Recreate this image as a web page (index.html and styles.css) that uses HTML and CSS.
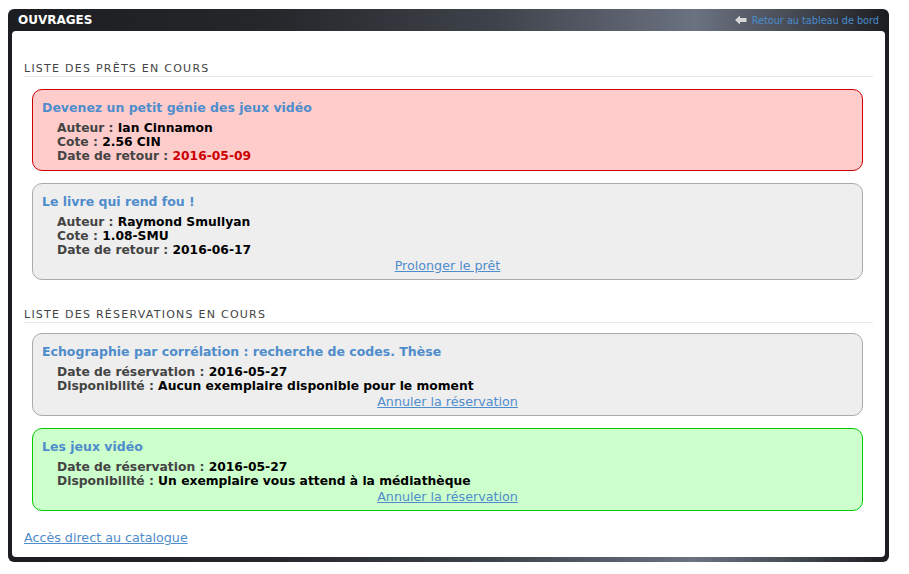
FILE: index.html
```html
<!DOCTYPE html>
<html lang="fr">
<head>
<meta charset="utf-8">
<title>Ouvrages</title>
<link rel="stylesheet" href="styles.css">
</head>
<body>
<div class="frame">
  <div class="frame-head">
    <h1 class="frame-title">OUVRAGES</h1>
    <a class="back" href="#"><svg class="back-icon" width="12" height="10" viewBox="0 0 12 10"><path d="M0 5 L5 0.5 L5 3 L11.5 3 L11.5 7 L5 7 L5 9.5 Z" fill="#d8d8d8"/></svg>Retour au tableau de bord</a>
  </div>
  <div class="frame-body">
    <h2 class="section-title">LISTE DES PRÊTS EN COURS</h2>
    <div class="card card-late">
      <div class="card-title">Devenez un petit génie des jeux vidéo</div>
      <div class="card-info">
        <div><span class="lbl">Auteur :</span> Ian Cinnamon</div>
        <div><span class="lbl">Cote :</span> 2.56 CIN</div>
        <div><span class="lbl">Date de retour :</span> <span class="late">2016-05-09</span></div>
      </div>
    </div>
    <div class="card">
      <div class="card-title">Le livre qui rend fou !</div>
      <div class="card-info">
        <div><span class="lbl">Auteur :</span> Raymond Smullyan</div>
        <div><span class="lbl">Cote :</span> 1.08-SMU</div>
        <div><span class="lbl">Date de retour :</span> 2016-06-17</div>
      </div>
      <div class="card-action"><a href="#">Prolonger le prêt</a></div>
    </div>

    <h2 class="section-title section-second">LISTE DES RÉSERVATIONS EN COURS</h2>
    <div class="card">
      <div class="card-title">Echographie par corrélation : recherche de codes. Thèse</div>
      <div class="card-info">
        <div><span class="lbl">Date de réservation :</span> 2016-05-27</div>
        <div><span class="lbl">Disponibilité :</span> Aucun exemplaire disponible pour le moment</div>
      </div>
      <div class="card-action"><a href="#">Annuler la réservation</a></div>
    </div>
    <div class="card card-ready">
      <div class="card-title">Les jeux vidéo</div>
      <div class="card-info">
        <div><span class="lbl">Date de réservation :</span> 2016-05-27</div>
        <div><span class="lbl">Disponibilité :</span> Un exemplaire vous attend à la médiathèque</div>
      </div>
      <div class="card-action"><a href="#">Annuler la réservation</a></div>
    </div>

    <a class="catalog" href="#">Accès direct au catalogue</a>
  </div>
</div>
</body>
</html>
```
FILE: styles.css
```css
html, body {
  margin: 0;
  padding: 0;
  background: #fff;
}
body {
  padding: 9px 20px 0 8px;
  font-family: "DejaVu Sans", Verdana, sans-serif;
}
.frame {
  width: 881px;
  height: 553px;
  box-sizing: border-box;
  border-radius: 6px;
  background: linear-gradient(to right, #1c1d20 0%, #25272b 30%, #3e424a 55%, #6b7280 78%, #4a4f58 88%, #1c1d20 100%);
  padding: 0 4px 5px 4px;
  display: flex;
  flex-direction: column;
}
.frame-head {
  flex: 0 0 22px;
  height: 22px;
  display: flex;
  align-items: center;
  justify-content: space-between;
  padding: 0 6px 0 6px;
}
.frame-title {
  margin: 0;
  color: #fff;
  font-size: 12px;
  font-weight: bold;
}
.back {
  color: #4a8ccc;
  font-size: 9.7px;
  text-decoration: none;
  display: flex;
  align-items: center;
  gap: 5px;
}
.back-icon {
  display: block;
}
.frame-body {
  flex: 1 1 auto;
  min-height: 0;
  background: #fff;
  border-radius: 4px;
  padding: 31px 12px 0 12px;
  display: flex;
  flex-direction: column;
}
.section-title {
  margin: 0 0 12px 0;
  font-size: 11px;
  line-height: 13px;
  font-weight: normal;
  letter-spacing: 1.25px;
  color: #444;
  padding-bottom: 1px;
  border-bottom: 1px solid #e8e8e8;
}
.section-second {
  margin-top: 16px;
  margin-bottom: 10px;
}
.card {
  margin: 0 10px 12px 8px;
  border: 1px solid #aaa;
  background: #eeeeee;
  border-radius: 10px;
  padding: 10px 9px 7px 9px;
}
.card-late {
  background: #ffcccc;
  border-color: #cc0000;
}
.card-ready {
  background: #ccffcc;
  border-color: #00cc00;
}
.card-title {
  color: #4f8ccb;
  font-weight: bold;
  font-size: 12.5px;
  line-height: 16px;
  margin-bottom: 5px;
}
.card-info {
  padding-left: 15px;
  font-size: 12.3px;
  font-weight: bold;
  line-height: 14px;
  color: #000;
}
.lbl {
  color: #444;
}
.late {
  color: #cc0000;
}
.card-action {
  text-align: center;
  font-size: 12.7px;
  line-height: 14px;
  margin-top: 2px;
  margin-bottom: -1px;
}
.card-action a, .catalog {
  color: #4f8ccb;
  text-decoration: underline;
}
.catalog {
  font-size: 12.7px;
  line-height: 15px;
  margin-top: 7px;
  align-self: flex-start;
}
```
